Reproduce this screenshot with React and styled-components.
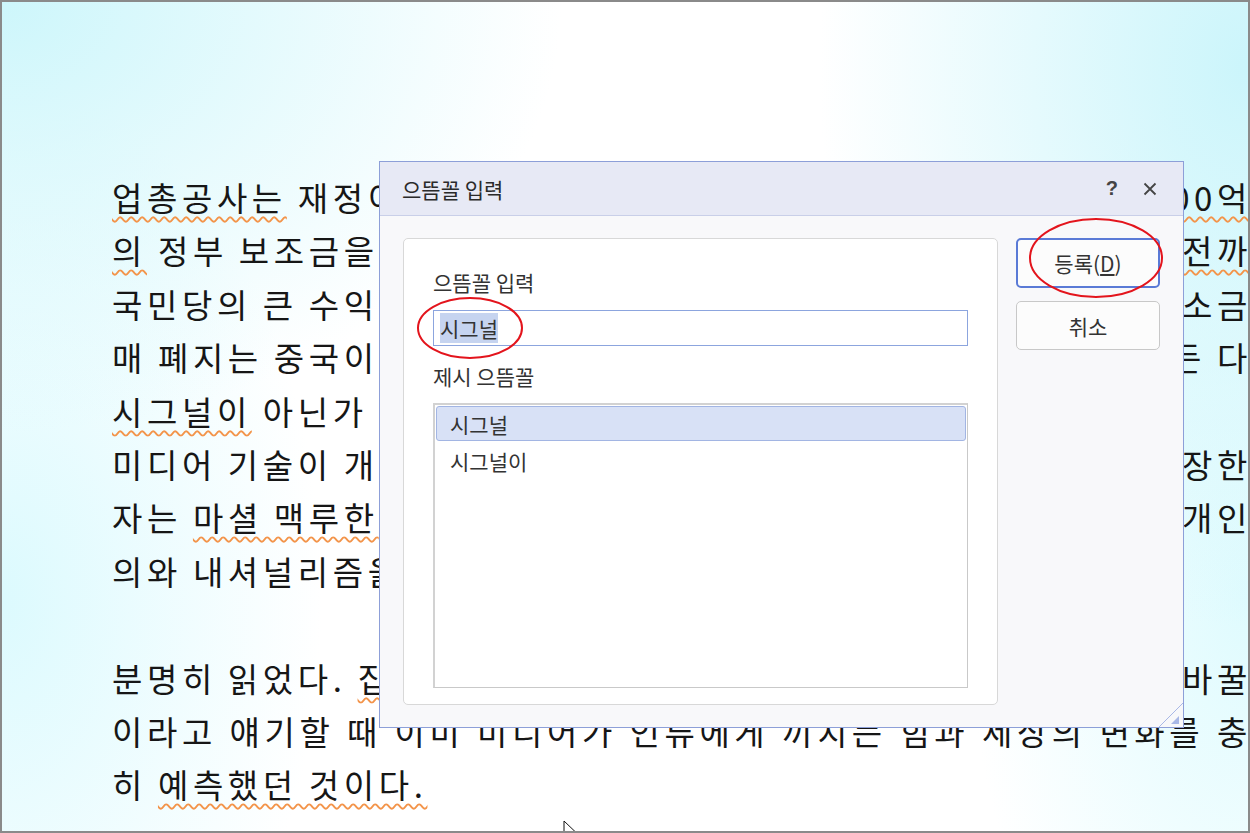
import React from 'react';
import styled, { createGlobalStyle, css } from 'styled-components';

const GlobalStyle = createGlobalStyle`
  html, body {
    margin: 0;
    padding: 0;
    background: #fff;
  }
  body {
    font-family: "Noto Sans CJK KR", "Noto Sans", sans-serif;
  }
`;

const Screen = styled.div`
  position: relative;
  width: 1250px;
  height: 833px;
  box-sizing: border-box;
  border: 2px solid #8a8a8a;
  overflow: hidden;
  background:
    radial-gradient(ellipse 560px 430px at 0 0, #cdf6fb, rgba(205, 246, 251, 0)),
    radial-gradient(ellipse 430px 560px at 100% 8%, #cbf5fb, rgba(203, 245, 251, 0)),
    radial-gradient(ellipse 320px 520px at 0 72%, #dcfafe, rgba(220, 250, 254, 0)),
    radial-gradient(ellipse 280px 520px at 100% 72%, #dffbfe, rgba(223, 251, 254, 0)),
    #fff;
`;

const Page = styled.div`
  padding: 169px 0 0 110px;
  width: 1140px;
  font-family: "Noto Sans CJK KR", sans-serif;
  font-size: 33px;
  letter-spacing: 4.6px;
  word-spacing: -1px;
  line-height: 53.4px;
  color: #161616;
`;

const Line = styled.div`
  display: flex;
  justify-content: space-between;
  height: 53.4px;
  white-space: nowrap;
`;

const Squiggle = styled.span`
  text-decoration: underline wavy #f3944a;
  text-decoration-thickness: 1.5px;
  text-underline-offset: 5px;
`;

const Dialog = styled.div`
  position: absolute;
  left: 377px;
  top: 159px;
  width: 805px;
  height: 567px;
  box-sizing: border-box;
  border: 1px solid #8d9fd8;
  background: #f8f8fa;
  display: flex;
  flex-direction: column;
  font-family: "Noto Sans CJK KR", sans-serif;
  font-size: 21px;
  color: #2a2a2a;
`;

const TitleBar = styled.div`
  height: 53px;
  flex: none;
  display: flex;
  align-items: center;
  justify-content: space-between;
  padding: 0 26px 0 22px;
  background: #e7e9f5;
  border-bottom: 1px solid #c9cfe8;
`;

const TitleTools = styled.div`
  display: flex;
  align-items: center;
  gap: 25px;
  color: #444;
`;

const HelpMark = styled.span`
  font-family: "Liberation Sans", sans-serif;
  font-weight: 700;
  font-size: 20px;
`;

const Body = styled.div`
  flex: 1;
  display: flex;
  gap: 18px;
  padding: 22px 23px;
`;

const Panel = styled.div`
  flex: 1;
  display: flex;
  flex-direction: column;
  background: #fff;
  border: 1px solid #d8d8d8;
  border-radius: 5px;
  padding: 31px 29px 16px;
`;

const Label = styled.div`
  line-height: 24px;
  margin-top: ${p => p.$gap || 0}px;
  color: #333;
`;

const NameInput = styled.div`
  margin-top: 16px;
  height: 36px;
  box-sizing: border-box;
  border: 1px solid #8ca5de;
  background: #fff;
  display: flex;
  align-items: center;
  padding-left: 6px;
`;

const Selected = styled.span`
  display: inline-block;
  line-height: 30px;
  background: #c6d4f0;
  color: #333;
`;

const List = styled.div`
  flex: 1;
  margin-top: 15px;
  border: 1px solid #c9c9c9;
  border-left-width: 2px;
  border-top-width: 2px;
  border-left-color: #d2d2d2;
  border-top-color: #d2d2d2;
  padding: 1px 1px 2px 1px;
  display: flex;
  flex-direction: column;
  gap: 2px;
`;

const Item = styled.div`
  height: 35px;
  box-sizing: border-box;
  display: flex;
  align-items: center;
  padding-left: 13px;
  border: 1px solid transparent;
  border-radius: 3px;
  color: #333;
  ${p => p.$active && css`
    background: #d8e1f6;
    border-color: #a2b5e3;
  `}
`;

const ButtonColumn = styled.div`
  width: 144px;
  display: flex;
  flex-direction: column;
  gap: 13px;
`;

const Button = styled.div`
  height: ${p => (p.$primary ? 50 : 49)}px;
  box-sizing: border-box;
  display: flex;
  align-items: center;
  justify-content: center;
  border-radius: 5px;
  background: #fcfcfc;
  color: #333;
  border: ${p => (p.$primary ? '2px solid #5a7ad6' : '1px solid #c8c8c8')};
`;

const Grip = styled.svg`
  position: absolute;
  right: 0;
  bottom: 0;
`;

const Overlay = styled.svg`
  position: absolute;
  left: 0;
  top: 0;
  pointer-events: none;
`;

const Pointer = styled.svg`
  position: absolute;
  left: 561px;
  top: 818px;
`;

const justified = '이라고 얘기할 때 이미 미디어가 인류에게 끼치는 힘과 세상의 변화를 충'.split(' ');

export default function App() {
  return (
    <>
      <GlobalStyle />
      <Screen>
        <Page>
          <Line>
            <span><Squiggle>업총공사는</Squiggle> 재정이</span>
            <Squiggle>000억</Squiggle>
          </Line>
          <Line>
            <span><Squiggle>의</Squiggle> 정부 보조금을</span>
            <Squiggle>전까</Squiggle>
          </Line>
          <Line>
            <span>국민당의 큰 수익</span>
            <span>소금</span>
          </Line>
          <Line>
            <span>매 폐지는 중국이</span>
            <span>든 다</span>
          </Line>
          <Line>
            <span><Squiggle>시그널이</Squiggle> 아닌가</span>
          </Line>
          <Line>
            <span>미디어 기술이 개</span>
            <span>장한</span>
          </Line>
          <Line>
            <span>자는 <Squiggle>마셜 맥루한</Squiggle></span>
            <span>개인</span>
          </Line>
          <Line>
            <span>의와 내셔널리즘을</span>
          </Line>
          <Line />
          <Line>
            <span>분명히 읽었다. <Squiggle>집</Squiggle></span>
            <span>바꿀</span>
          </Line>
          <Line>
            {justified.map(word => (
              <span key={word}>{word}</span>
            ))}
          </Line>
          <Line>
            <span>히 <Squiggle>예측했던 것이다.</Squiggle></span>
          </Line>
        </Page>

        <Dialog>
          <TitleBar>
            <span>으뜸꼴 입력</span>
            <TitleTools>
              <HelpMark>?</HelpMark>
              <svg width="14" height="14" viewBox="0 0 14 14">
                <path d="M1.5 1.5 L12.5 12.5 M12.5 1.5 L1.5 12.5" stroke="#444" strokeWidth="1.8" />
              </svg>
            </TitleTools>
          </TitleBar>
          <Body>
            <Panel>
              <Label>으뜸꼴 입력</Label>
              <NameInput>
                <Selected>시그널</Selected>
              </NameInput>
              <Label $gap={18}>제시 으뜸꼴</Label>
              <List>
                <Item $active>시그널</Item>
                <Item>시그널이</Item>
              </List>
            </Panel>
            <ButtonColumn>
              <Button $primary>등록(<u>D</u>)</Button>
              <Button>취소</Button>
            </ButtonColumn>
          </Body>
          <Grip width="24" height="24" viewBox="0 0 24 24">
            <path d="M0 24 L24 0" stroke="#a9b8e6" strokeWidth="1" />
            <path d="M12 21 L20 21 L20 13 Z" fill="#a9b8e6" />
          </Grip>
        </Dialog>

        <Overlay width="1246" height="829">
          <ellipse cx="468" cy="326" rx="52" ry="30" fill="none" stroke="#e3141c" strokeWidth="2" />
          <ellipse cx="1094" cy="256" rx="66" ry="39" fill="none" stroke="#e3141c" strokeWidth="2" />
        </Overlay>

        <Pointer width="14" height="20" viewBox="0 0 14 20">
          <path d="M1 1 L1 16 L5 12.5 L8 19 L10 18 L7.2 11.5 L12 11.5 Z" fill="#fff" stroke="#111" strokeWidth="1" />
        </Pointer>
      </Screen>
    </>
  );
}
